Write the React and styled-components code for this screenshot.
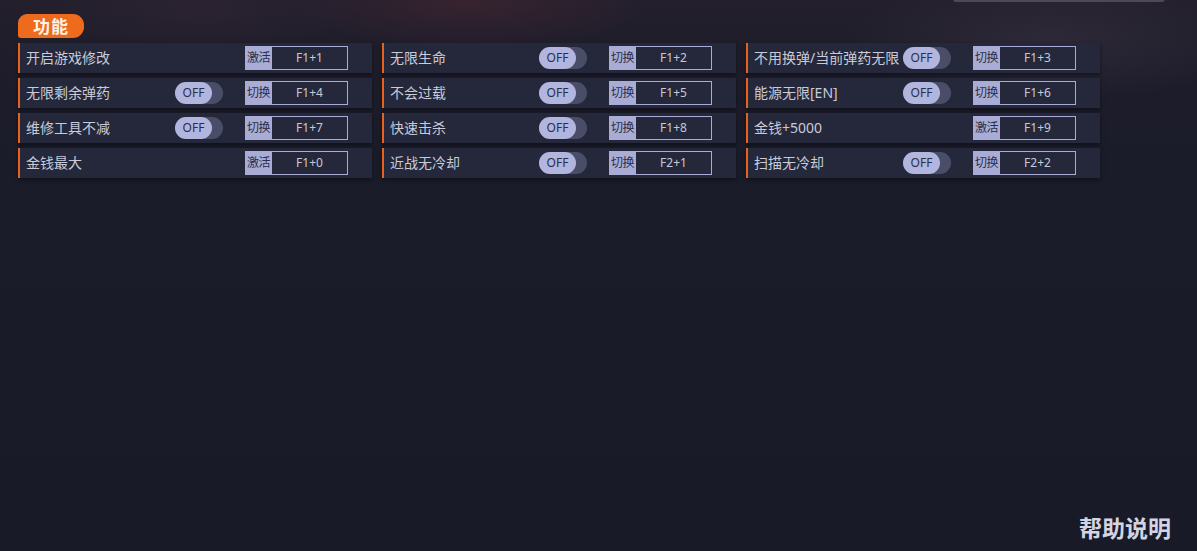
import React from "react";
import styled, { createGlobalStyle } from "styled-components";

const Global = createGlobalStyle`
  html, body { margin: 0; padding: 0; }
  body {
    width: 1197px; height: 551px; overflow: hidden;
    background: #1a1c2a;
    font-family: "Noto Sans", "Noto Sans CJK SC", sans-serif;
  }
`;

const Page = styled.div`
  position: relative;
  width: 1197px;
  height: 551px;
  box-sizing: border-box;
  padding: 14px 0 0 18px;
  overflow: hidden;
  background:
    radial-gradient(ellipse 260px 70px at 470px 0px, rgba(80, 40, 50, 0.45), transparent 70%),
    radial-gradient(ellipse 300px 90px at 1050px 40px, rgba(60, 55, 70, 0.45), transparent 70%),
    radial-gradient(ellipse 240px 60px at 200px 10px, rgba(50, 38, 52, 0.5), transparent 70%),
    linear-gradient(180deg, #231f2d 0px, #1d1c2a 90px, #1a1c2a 200px, #181a28 551px);
`;

const TopBar = styled.div`
  position: absolute;
  top: -4px;
  left: 953px;
  width: 212px;
  height: 6px;
  border-radius: 3px;
  background: #4b4a58;
`;

const Tag = styled.div`
  display: inline-flex;
  align-items: center;
  justify-content: center;
  width: 66px;
  height: 24px;
  border-radius: 9px 11px 11px 3px;
  background: #ee6a1c;
  color: #fff3e8;
  font-size: 17px;
  font-weight: 700;
  letter-spacing: 1px;
  line-height: 1;
`;

const Grid = styled.div`
  display: grid;
  grid-template-columns: repeat(3, 354px);
  column-gap: 10px;
  row-gap: 5px;
  margin-top: 5px;
`;

const Row = styled.div`
  display: flex;
  align-items: center;
  height: 30px;
  box-sizing: border-box;
  border-left: 2px solid #e9621d;
  padding-left: 6px;
  background: #25283a;
  box-shadow: 0 2px 4px rgba(8, 9, 16, 0.55);
`;

const Label = styled.span`
  flex: none;
  width: 149px;
  white-space: nowrap;
  color: #c9cbd9;
  font-size: 14px;
  line-height: 1;
`;

const ToggleSlot = styled.div`
  flex: none;
  width: 70px;
  display: flex;
  align-items: center;
`;

const Toggle = styled.div`
  position: relative;
  width: 48px;
  height: 22px;
  border-radius: 11px;
  background: #4a4d67;
`;

const Knob = styled.div`
  position: absolute;
  left: 0;
  top: 0;
  width: 37px;
  height: 22px;
  border-radius: 11px;
  background: #b2b5dd;
  color: #2b2e48;
  font-size: 12px;
  line-height: 22px;
  text-align: center;
`;

const Key = styled.div`
  flex: none;
  display: flex;
  height: 24px;
  box-sizing: border-box;
`;

const KeyMode = styled.div`
  width: 27px;
  background: #a9add6;
  color: #2c2f48;
  font-size: 12px;
  line-height: 24px;
  text-align: center;
  white-space: nowrap;
  letter-spacing: -0.5px;
`;

const KeyCombo = styled.div`
  width: 76px;
  box-sizing: border-box;
  border: 1px solid #a9add6;
  border-left: none;
  color: #c6c8d8;
  font-size: 12px;
  line-height: 22px;
  text-align: center;
`;

const Help = styled.div`
  position: absolute;
  right: 26px;
  bottom: 8px;
  color: #d2d4e2;
  font-size: 23px;
  font-weight: 700;
  line-height: 1.2;
`;

const items = [
  { name: "开启游戏修改", toggle: false, mode: "激活", key: "F1+1" },
  { name: "无限生命", toggle: true, mode: "切换", key: "F1+2" },
  { name: "不用换弹/当前弹药无限", toggle: true, mode: "切换", key: "F1+3" },
  { name: "无限剩余弹药", toggle: true, mode: "切换", key: "F1+4" },
  { name: "不会过载", toggle: true, mode: "切换", key: "F1+5" },
  { name: "能源无限[EN]", toggle: true, mode: "切换", key: "F1+6" },
  { name: "维修工具不减", toggle: true, mode: "切换", key: "F1+7" },
  { name: "快速击杀", toggle: true, mode: "切换", key: "F1+8" },
  { name: "金钱+5000", toggle: false, mode: "激活", key: "F1+9" },
  { name: "金钱最大", toggle: false, mode: "激活", key: "F1+0" },
  { name: "近战无冷却", toggle: true, mode: "切换", key: "F2+1" },
  { name: "扫描无冷却", toggle: true, mode: "切换", key: "F2+2" },
];

export default function App() {
  return (
    <>
      <Global />
      <Page>
        <TopBar />
        <Tag>功能</Tag>
        <Grid>
          {items.map((it) => (
            <Row key={it.key}>
              <Label>{it.name}</Label>
              <ToggleSlot>
                {it.toggle && (
                  <Toggle>
                    <Knob>OFF</Knob>
                  </Toggle>
                )}
              </ToggleSlot>
              <Key>
                <KeyMode>{it.mode}</KeyMode>
                <KeyCombo>{it.key}</KeyCombo>
              </Key>
            </Row>
          ))}
        </Grid>
        <Help>帮助说明</Help>
      </Page>
    </>
  );
}
